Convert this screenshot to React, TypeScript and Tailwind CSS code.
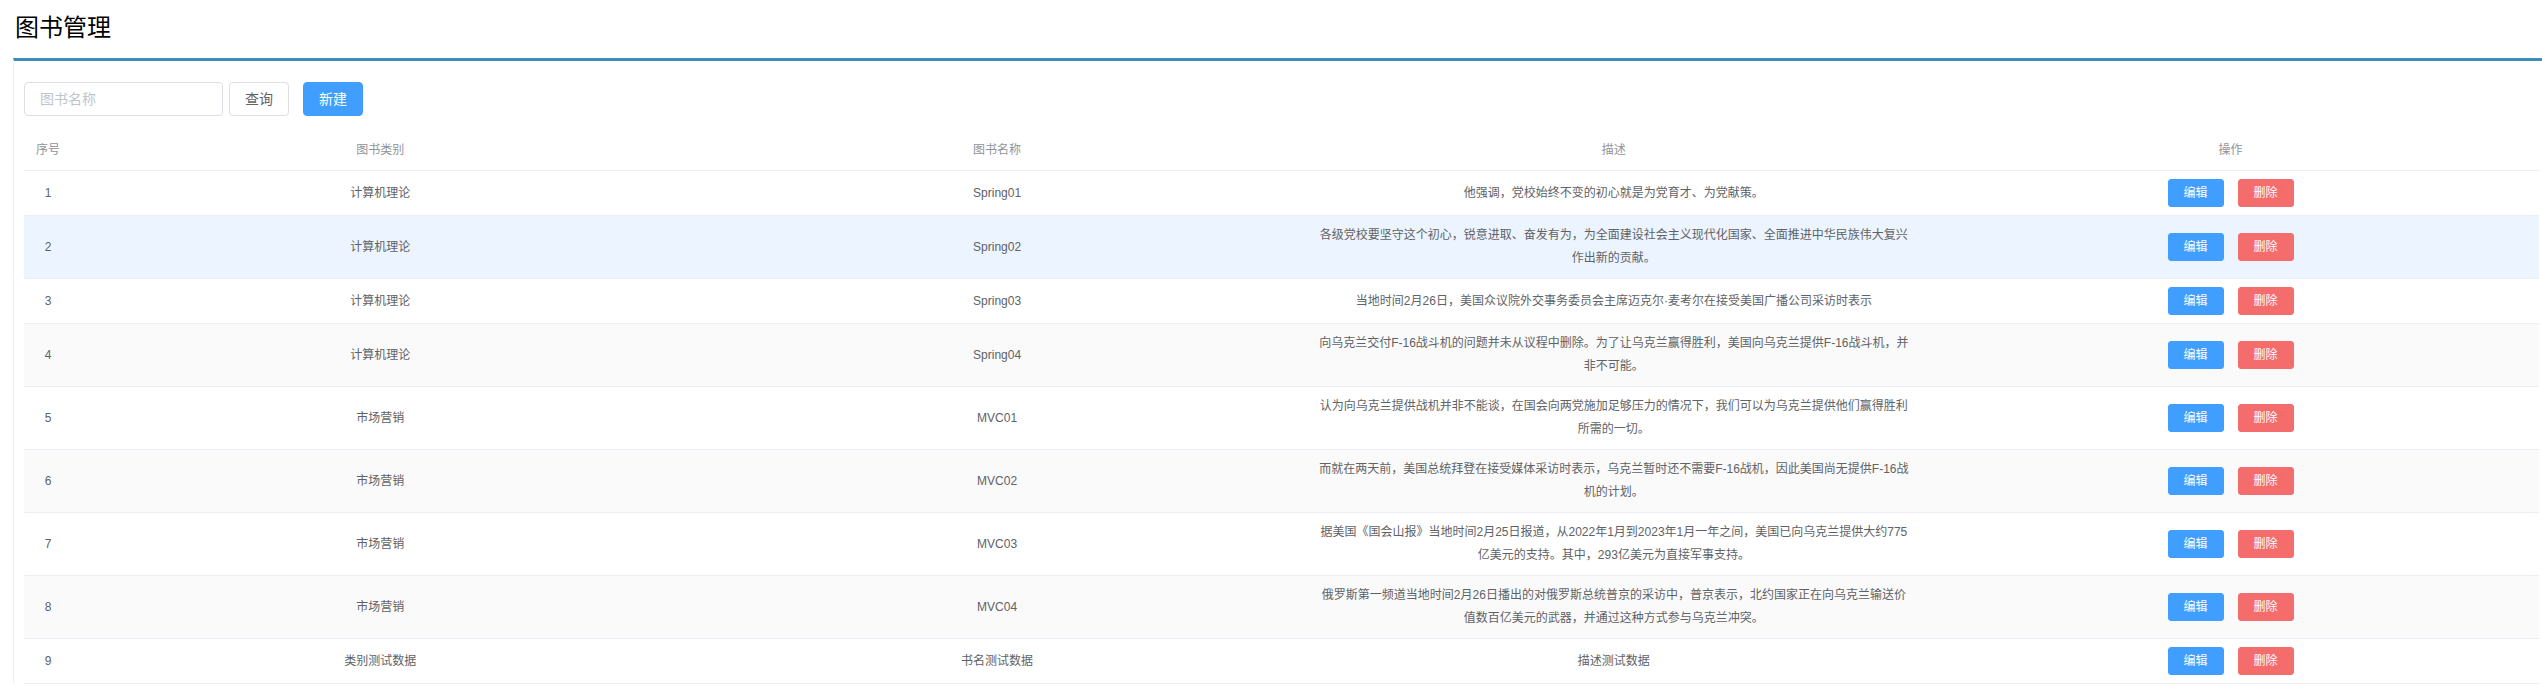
const books = [
  { id: 1, type: '计算机理论', name: 'Spring01', desc: ['他强调，党校始终不变的初心就是为党育才、为党献策。'] },
  {
    id: 2,
    type: '计算机理论',
    name: 'Spring02',
    desc: ['各级党校要坚守这个初心，锐意进取、奋发有为，为全面建设社会主义现代化国家、全面推进中华民族伟大复兴', '作出新的贡献。'],
  },
  { id: 3, type: '计算机理论', name: 'Spring03', desc: ['当地时间2月26日，美国众议院外交事务委员会主席迈克尔·麦考尔在接受美国广播公司采访时表示'] },
  {
    id: 4,
    type: '计算机理论',
    name: 'Spring04',
    desc: ['向乌克兰交付F-16战斗机的问题并未从议程中删除。为了让乌克兰赢得胜利，美国向乌克兰提供F-16战斗机，并', '非不可能。'],
  },
  {
    id: 5,
    type: '市场营销',
    name: 'MVC01',
    desc: ['认为向乌克兰提供战机并非不能谈，在国会向两党施加足够压力的情况下，我们可以为乌克兰提供他们赢得胜利', '所需的一切。'],
  },
  {
    id: 6,
    type: '市场营销',
    name: 'MVC02',
    desc: ['而就在两天前，美国总统拜登在接受媒体采访时表示，乌克兰暂时还不需要F-16战机，因此美国尚无提供F-16战', '机的计划。'],
  },
  {
    id: 7,
    type: '市场营销',
    name: 'MVC03',
    desc: ['据美国《国会山报》当地时间2月25日报道，从2022年1月到2023年1月一年之间，美国已向乌克兰提供大约775', '亿美元的支持。其中，293亿美元为直接军事支持。'],
  },
  {
    id: 8,
    type: '市场营销',
    name: 'MVC04',
    desc: ['俄罗斯第一频道当地时间2月26日播出的对俄罗斯总统普京的采访中，普京表示，北约国家正在向乌克兰输送价', '值数百亿美元的武器，并通过这种方式参与乌克兰冲突。'],
  },
  { id: 9, type: '类别测试数据', name: '书名测试数据', desc: ['描述测试数据'] },
]

function rowBg(i: number) {
  if (i === 1) return 'bg-[#ecf5ff]'
  if (i % 2 === 1) return 'bg-[#fafafa]'
  return 'bg-white'
}

export default function App() {
  return (
    <div className="min-h-screen w-[2542px] overflow-hidden bg-white font-['Liberation_Sans','Noto_Sans_CJK_SC',sans-serif]">
      <div className="h-[58px] pl-[15px] pt-[12px]">
        <h1 className="text-[24px] leading-[32px] text-black">图书管理</h1>
      </div>

      <div className="ml-[13px] border-t-[3px] border-l border-t-[#3c8dbc] border-l-[#f0f0f0] pl-[10px] pr-[3px] pt-[21px]">
        <div className="flex h-[34px] items-center">
          <input
            placeholder="图书名称"
            className="h-[34px] w-[199px] rounded-[4px] border border-[#dcdfe6] px-[15px] text-[14px] text-[#606266] outline-none placeholder:text-[#c0c4cc]"
          />
          <button className="ml-[6px] h-[34px] w-[60px] rounded-[4px] border border-[#dcdfe6] bg-white text-[14px] text-[#606266]">
            查询
          </button>
          <button className="ml-[14px] h-[34px] w-[60px] rounded-[4px] border border-[#409eff] bg-[#409eff] text-[14px] text-white">
            新建
          </button>
        </div>

        <table className="mt-[15px] w-full table-fixed border-collapse text-[12px]">
          <colgroup>
            <col className="w-[48px]" />
            <col />
            <col />
            <col />
            <col />
          </colgroup>
          <thead>
            <tr className="border-b border-[#ebeef5] text-[#909399]">
              {['序号', '图书类别', '图书名称', '描述', '操作'].map((h) => (
                <th key={h} className="px-[10px] py-[8px] text-center font-normal leading-[23px]">
                  {h}
                </th>
              ))}
            </tr>
          </thead>
          <tbody className="text-[#606266]">
            {books.map((b, i) => (
              <tr key={b.id} className={`border-b border-[#ebeef5] ${rowBg(i)}`}>
                <td className="px-[10px] py-[8px] text-center leading-[23px]">{b.id}</td>
                <td className="px-[10px] py-[8px] text-center leading-[23px]">{b.type}</td>
                <td className="px-[10px] py-[8px] text-center leading-[23px]">{b.name}</td>
                <td className="px-[10px] py-[8px] text-center leading-[23px]">
                  {b.desc.map((line) => (
                    <div key={line} className="whitespace-nowrap">
                      {line}
                    </div>
                  ))}
                </td>
                <td className="px-[10px] py-[8px]">
                  <div className="flex h-[28px] items-center justify-center gap-[14px]">
                    <button className="h-[28px] w-[56px] rounded-[3px] border border-[#409eff] bg-[#409eff] text-[12px] text-white">
                      编辑
                    </button>
                    <button className="h-[28px] w-[56px] rounded-[3px] border border-[#f56c6c] bg-[#f56c6c] text-[12px] text-white">
                      删除
                    </button>
                  </div>
                </td>
              </tr>
            ))}
          </tbody>
        </table>
      </div>
    </div>
  )
}
